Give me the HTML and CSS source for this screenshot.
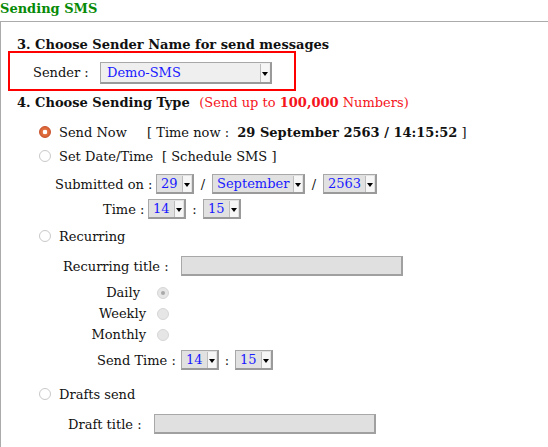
FILE: index.html
```html
<!DOCTYPE html>
<html>
<head>
<meta charset="utf-8">
<link rel="stylesheet" href="styles.css">
</head>
<body>
<div class="title">Sending SMS</div>
<div class="panel">
  <div class="h3">3. Choose Sender Name for send messages</div>
  <div class="sender-box">
    <span class="sender-label">Sender :</span>
    <span class="sel sel-sender"><span class="sel-text">Demo-SMS</span><span class="arrow"></span></span>
  </div>
  <div class="h4">4. Choose Sending Type <span class="limit">(Send up to <b>100,000</b> Numbers)</span></div>

  <div class="row r-now">
    <span class="radio checked"></span>
    <span class="opt w-now">Send Now</span>
    <span>[ Time now : &nbsp;<b>29 September 2563 / 14:15:52</b> ]</span>
  </div>
  <div class="row r-date">
    <span class="radio"></span>
    <span class="opt w-date">Set Date/Time</span>
    <span>[ Schedule SMS ]</span>
  </div>
  <div class="row r-sub">
    <span class="lbl">Submitted on :</span>
    <span class="sel w38"><span class="sel-text">29</span><span class="arrow"></span></span>
    <span class="sep">/</span>
    <span class="sel w93"><span class="sel-text">September</span><span class="arrow"></span></span>
    <span class="sep">/</span>
    <span class="sel w54"><span class="sel-text">2563</span><span class="arrow"></span></span>
  </div>
  <div class="row r-time">
    <span class="lbl">Time :</span>
    <span class="sel w38"><span class="sel-text">14</span><span class="arrow"></span></span>
    <span class="sep sep-colon">:</span>
    <span class="sel w38"><span class="sel-text">15</span><span class="arrow"></span></span>
  </div>
  <div class="row r-rec">
    <span class="radio"></span>
    <span class="opt">Recurring</span>
  </div>
  <div class="row r-rtitle">
    <span class="lbl">Recurring title :</span>
    <span class="field w222"></span>
  </div>
  <div class="row r-freq r-daily">
    <span class="freq">Daily</span>
    <span class="radio disabled dot"></span>
  </div>
  <div class="row r-freq">
    <span class="freq">Weekly</span>
    <span class="radio disabled"></span>
  </div>
  <div class="row r-freq">
    <span class="freq">Monthly</span>
    <span class="radio disabled"></span>
  </div>
  <div class="row r-stime">
    <span class="lbl">Send Time :</span>
    <span class="sel w38"><span class="sel-text">14</span><span class="arrow"></span></span>
    <span class="sep sep-colon2">:</span>
    <span class="sel w38"><span class="sel-text">15</span><span class="arrow"></span></span>
  </div>
  <div class="row r-draft">
    <span class="radio"></span>
    <span class="opt">Drafts send</span>
  </div>
  <div class="row r-dtitle">
    <span class="lbl">Draft title :</span>
    <span class="field w222"></span>
  </div>
</div>
</body>
</html>
```
FILE: styles.css
```css
html, body {
  margin: 0;
  padding: 0;
  background: #fff;
}
body {
  font-family: "DejaVu Serif", serif;
  font-size: 13px;
  color: #111;
  width: 548px;
  height: 447px;
  overflow: hidden;
}
.title {
  height: 21px;
  line-height: 18px;
  font-weight: bold;
  color: #078a07;
}
.panel {
  border-top: 1px solid #ababab;
  border-left: 1px solid #ababab;
  padding: 16px 0 0 16px;
  height: 426px;
  box-sizing: border-box;
  overflow: hidden;
}
.h3 {
  font-weight: bold;
  line-height: 14px;
  height: 14px;
}
.sender-box {
  margin: -1px 0 0 -9px;
  border: 2px solid #f00;
  display: flex;
  align-items: center;
  padding: 0 0 0 23px;
  box-sizing: border-box;
  height: 40px;
  width: 288px;
}
.sender-label {
  width: 67px;
  padding-top: 2px;
}
.sel {
  display: inline-flex;
  align-items: center;
  box-sizing: border-box;
  height: 20px;
  background: #e1e1e1;
  border: 1px solid #a8a8a8;
  border-right: 2px solid #9a9a9a;
  border-bottom: 2px solid #9a9a9a;
  color: #1a1aff;
  padding-left: 4px;
  position: relative;
}
.sel-text {
  flex: 1;
  line-height: 16px;
}
.sel-sender {
  width: 172px;
  height: 22px;
  background: #efefef;
  padding-left: 6px;
  margin-top: 4px;
}
.arrow {
  width: 8px;
  height: 16px;
  background: #f6f6f6;
  border-left: 1px solid #bdbdbd;
  position: relative;
  margin-right: 1px;
}
.sel-sender .arrow {
  height: 18px;
}
.arrow::after {
  content: "";
  position: absolute;
  left: 1px;
  top: 50%;
  margin-top: -1px;
  border-left: 3px solid transparent;
  border-right: 3px solid transparent;
  border-top: 4px solid #000;
}
.h4 {
  font-weight: bold;
  line-height: 18px;
  margin-top: 3px;
}
.limit {
  font-weight: normal;
  color: #f5141c;
  margin-left: 5px;
}
.limit b {
  font-weight: bold;
}
.row {
  display: flex;
  align-items: center;
  height: 24px;
  white-space: nowrap;
}
.radio {
  width: 12px;
  height: 12px;
  border-radius: 50%;
  box-sizing: border-box;
  border: 1px solid #c9c9c9;
  background: #fff;
  flex: none;
  position: relative;
}
.radio.checked {
  border: 1px solid #c9502a;
  background: radial-gradient(circle at 50% 50%, #fff 0 2px, #e2703f 2.6px, #cf5a2e 100%);
}
.radio.disabled {
  background: #e6e6e6;
  border-color: #d6d6d6;
}
.radio.dot::after {
  content: "";
  position: absolute;
  left: 3px;
  top: 3px;
  width: 4px;
  height: 4px;
  border-radius: 50%;
  background: #a9a9a9;
}
.r-now, .r-date, .r-rec, .r-draft {
  padding-left: 22px;
}
.opt {
  margin-left: 8px;
}
.w-now { width: 88px; }
.w-date { width: 103px; }
.r-now { margin-top: 8px; }
.r-sub { margin-top: 4px; padding-left: 38px; }
.r-sub .lbl { width: 101px; }
.r-time { margin-top: 1px; padding-left: 86px; }
.r-time .lbl { width: 45px; }
.r-rec { margin-top: 3px; }
.r-rtitle { margin-top: 7px; height: 22px; padding-left: 46px; }
.r-rtitle .lbl { width: 118px; }
.r-freq { height: 21px; }
.r-daily { margin-top: 5px; }
.freq {
  width: 140px;
  text-align: right;
  padding-right: 11px;
  box-sizing: border-box;
}
.r-daily .freq { padding-right: 17px; }
.r-stime { margin-top: 4px; height: 22px; padding-left: 80px; }
.r-stime .lbl { width: 84px; }
.r-draft { margin-top: 11px; }
.r-dtitle { margin-top: 7px; height: 22px; padding-left: 51px; }
.r-dtitle .lbl { width: 86px; }
.sep {
  width: 18px;
  text-align: center;
}
.sep-colon { width: 17px; }
.sep-colon2 { width: 16px; }
.w38 { width: 38px; }
.w93 { width: 93px; }
.w54 { width: 54px; }
.field {
  display: block;
  box-sizing: border-box;
  height: 20px;
  background: #e0e0e0;
  border: 1px solid #a8a8a8;
  border-right: 2px solid #a0a0a0;
  border-bottom: 2px solid #a0a0a0;
}
.w222 { width: 222px; }
```
